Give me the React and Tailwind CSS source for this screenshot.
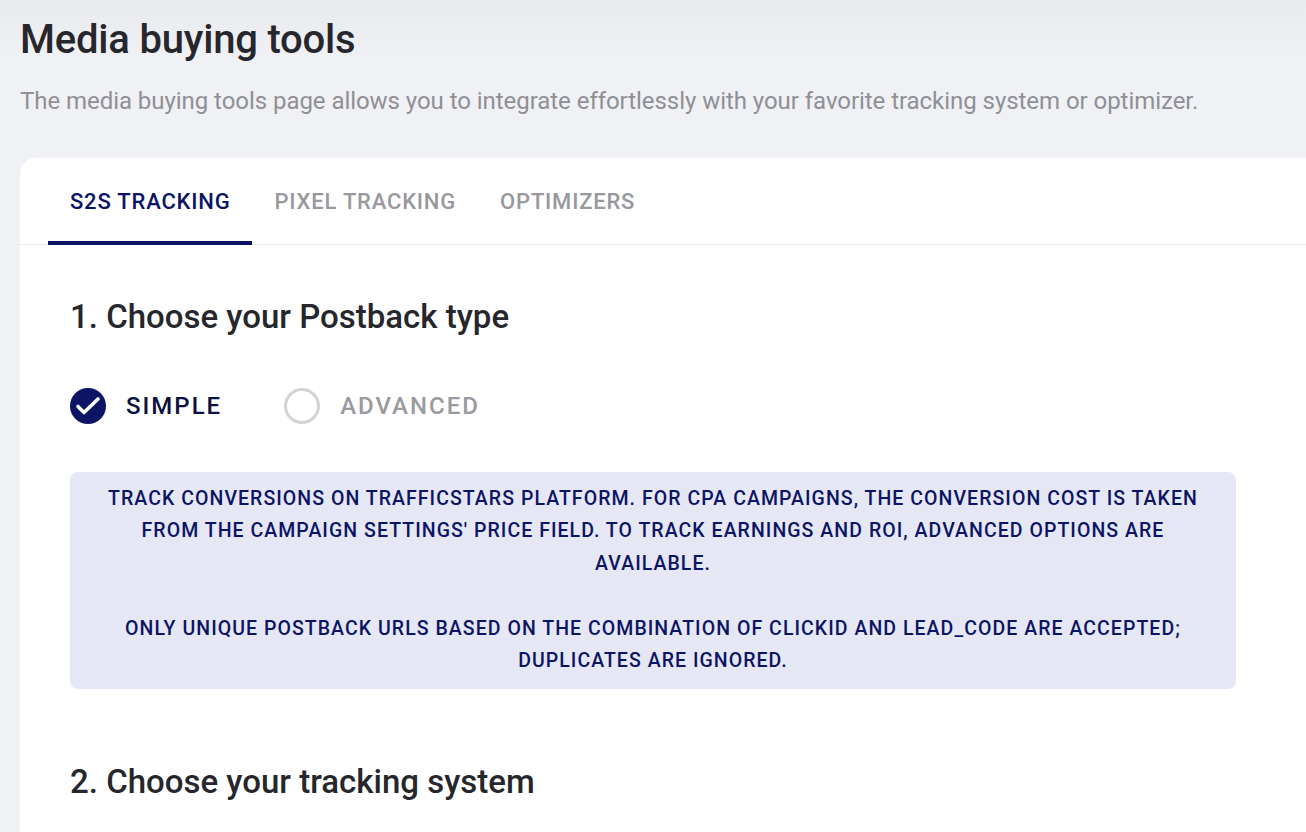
export default function App() {
  return (
    <div
      className="min-h-[832px] w-[1306px] overflow-hidden bg-[#f0f1f5] bg-gradient-to-b from-[#e9eaee] to-[#f0f1f5] bg-[length:100%_60px] bg-no-repeat"
      style={{ fontFamily: "Roboto, 'Liberation Sans', sans-serif" }}
    >
      <div className="pl-5 pt-[17px]">
        <h1 className="text-[40px] leading-[46px] font-medium text-[#26272c] tracking-[-0.2px]">Media buying tools</h1>
        <p className="mt-[24px] text-[24px] leading-[28px] tracking-[-0.05px] text-[#8f8f95]">
          The media buying tools page allows you to integrate effortlessly with your favorite tracking system or optimizer.
        </p>
      </div>
      <div className="ml-5 mt-[43px] bg-white rounded-tl-[16px] min-h-[674px]">
        <div className="flex px-7 border-b border-[#ececef]">
          <div className="relative px-[22px] pt-[30px] pb-[28px] text-[22px] leading-[28px] font-medium tracking-[0.8px] text-[#0b1465]">
            S2S TRACKING
            <div className="absolute left-0 right-0 bottom-[-1px] h-[4px] bg-[#0b1465]"></div>
          </div>
          <div className="px-[22px] pt-[30px] pb-[28px] text-[22px] leading-[28px] font-medium tracking-[0.8px] text-[#98989d]">
            PIXEL TRACKING
          </div>
          <div className="px-[22px] pt-[30px] pb-[28px] text-[22px] leading-[28px] font-medium tracking-[0.8px] text-[#98989d]">
            OPTIMIZERS
          </div>
        </div>
        <div className="pl-[50px] pr-[70px]">
          <h2 className="mt-[52px] text-[33px] leading-[40px] font-medium text-[#26272c]">1. Choose your Postback type</h2>
          <div className="mt-[51px] flex items-center">
            <div className="flex items-center">
              <div className="w-9 h-9 rounded-full bg-[#0b1465]">
                <svg width="36" height="36" viewBox="0 0 36 36" fill="none">
                  <path d="M8 18.5L14 24.5L28 11" stroke="white" strokeWidth="3.6" strokeLinecap="round" strokeLinejoin="round" />
                </svg>
              </div>
              <span className="ml-5 text-[24px] leading-[28px] font-medium tracking-[2px] text-[#0b1140]">SIMPLE</span>
            </div>
            <div className="flex items-center ml-[62px]">
              <div className="w-9 h-9 rounded-full border-[3px] border-[#d3d3d6]"></div>
              <span className="ml-5 text-[24px] leading-[28px] font-medium tracking-[2px] text-[#9a9a9f]">ADVANCED</span>
            </div>
          </div>
          <div className="mt-[48px] bg-[#e6e7f4] rounded-[8px] pt-[10.5px] pb-[11.5px] px-[30px] text-center text-[19.5px] leading-[32.5px] font-medium tracking-[1.05px] text-[#0b1465]">
            <p>TRACK CONVERSIONS ON TRAFFICSTARS PLATFORM. FOR CPA CAMPAIGNS, THE CONVERSION COST IS TAKEN FROM THE CAMPAIGN SETTINGS' PRICE FIELD. TO TRACK EARNINGS AND ROI, ADVANCED OPTIONS ARE AVAILABLE.</p>
            <p className="mt-[32.5px]">ONLY UNIQUE POSTBACK URLS BASED ON THE COMBINATION OF CLICKID AND LEAD_CODE ARE ACCEPTED; DUPLICATES ARE IGNORED.</p>
          </div>
          <h2 className="mt-[73px] text-[33px] leading-[40px] font-medium text-[#26272c]">2. Choose your tracking system</h2>
        </div>
      </div>
    </div>
  );
}
